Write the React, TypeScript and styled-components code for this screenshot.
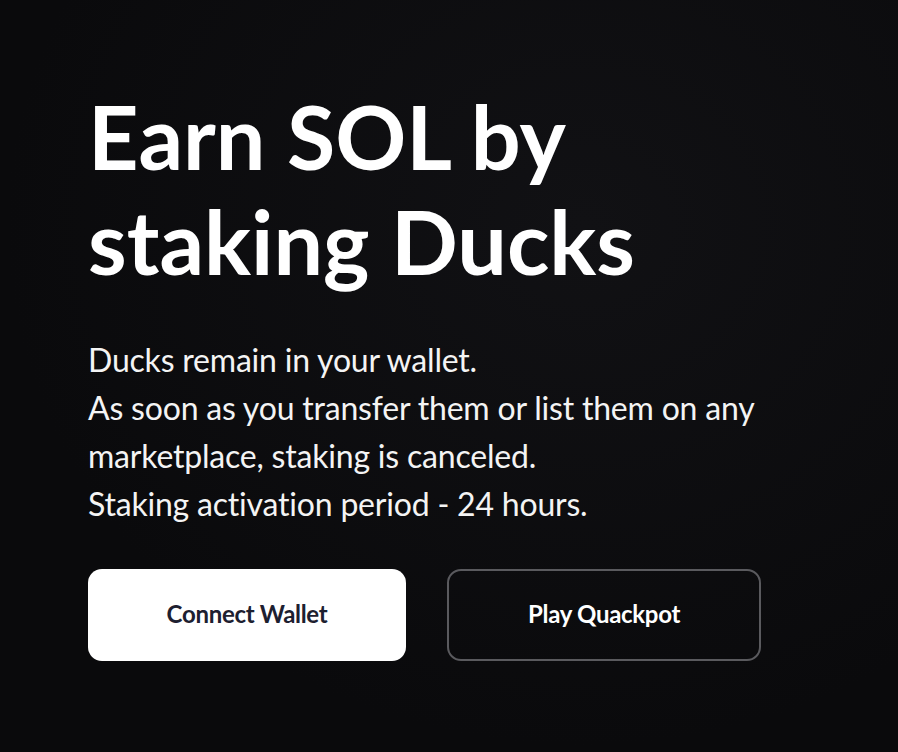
import styled, { createGlobalStyle } from "styled-components";

const GlobalStyle = createGlobalStyle`
  html, body {
    margin: 0;
    padding: 0;
    background: #0a0a0c;
  }
  body {
    font-family: Lato, "Open Sans", sans-serif;
    color: #ffffff;
  }
`;

export default function App() {
  return (
    <Page>
      <GlobalStyle />
      <Hero>
        <Title>
          Earn SOL by
          <br />
          staking Ducks
        </Title>
        <Description>
          Ducks remain in your wallet.
          <br />
          As soon as you transfer them or list them on any marketplace, staking
          is canceled.
          <br />
          Staking activation period - 24 hours.
        </Description>
        <Actions>
          <Button $variant="primary">Connect Wallet</Button>
          <Button $variant="outline">Play Quackpot</Button>
        </Actions>
      </Hero>
    </Page>
  );
}

const Page = styled.div`
  min-height: 752px;
  background: radial-gradient(
      ellipse at 65% 30%,
      rgba(24, 24, 28, 0.5),
      rgba(10, 10, 12, 0) 70%
    ),
    #0a0a0c;
  box-sizing: border-box;
  padding: 84px 0 0 88px;
`;

const Hero = styled.div`
  display: flex;
  flex-direction: column;
  align-items: flex-start;
`;

const Title = styled.h1`
  margin: 0;
  font-size: 88px;
  font-weight: 700;
  line-height: 105px;
  color: #ffffff;
`;

const Description = styled.p`
  margin: 42px 0 0;
  max-width: 690px;
  font-size: 32px;
  font-weight: 400;
  line-height: 48px;
  letter-spacing: -0.2px;
  color: #f4f4f4;
`;

const Actions = styled.div`
  display: flex;
  gap: 41px;
  margin-top: 41px;
`;

const Button = styled.button<{ $variant: "primary" | "outline" }>`
  height: 92px;
  box-sizing: border-box;
  border-radius: 14px;
  padding: 0 0 4px;
  font-family: Lato, "Open Sans", sans-serif;
  font-size: 24px;
  font-weight: 700;
  letter-spacing: -0.3px;
  cursor: pointer;
  background: ${(p) => (p.$variant === "primary" ? "#ffffff" : "transparent")};
  color: ${(p) => (p.$variant === "primary" ? "#1d2030" : "#ffffff")};
  border: ${(p) => (p.$variant === "primary" ? "none" : "2px solid #5a5a5e")};
  width: ${(p) => (p.$variant === "primary" ? "318px" : "314px")};
`;
